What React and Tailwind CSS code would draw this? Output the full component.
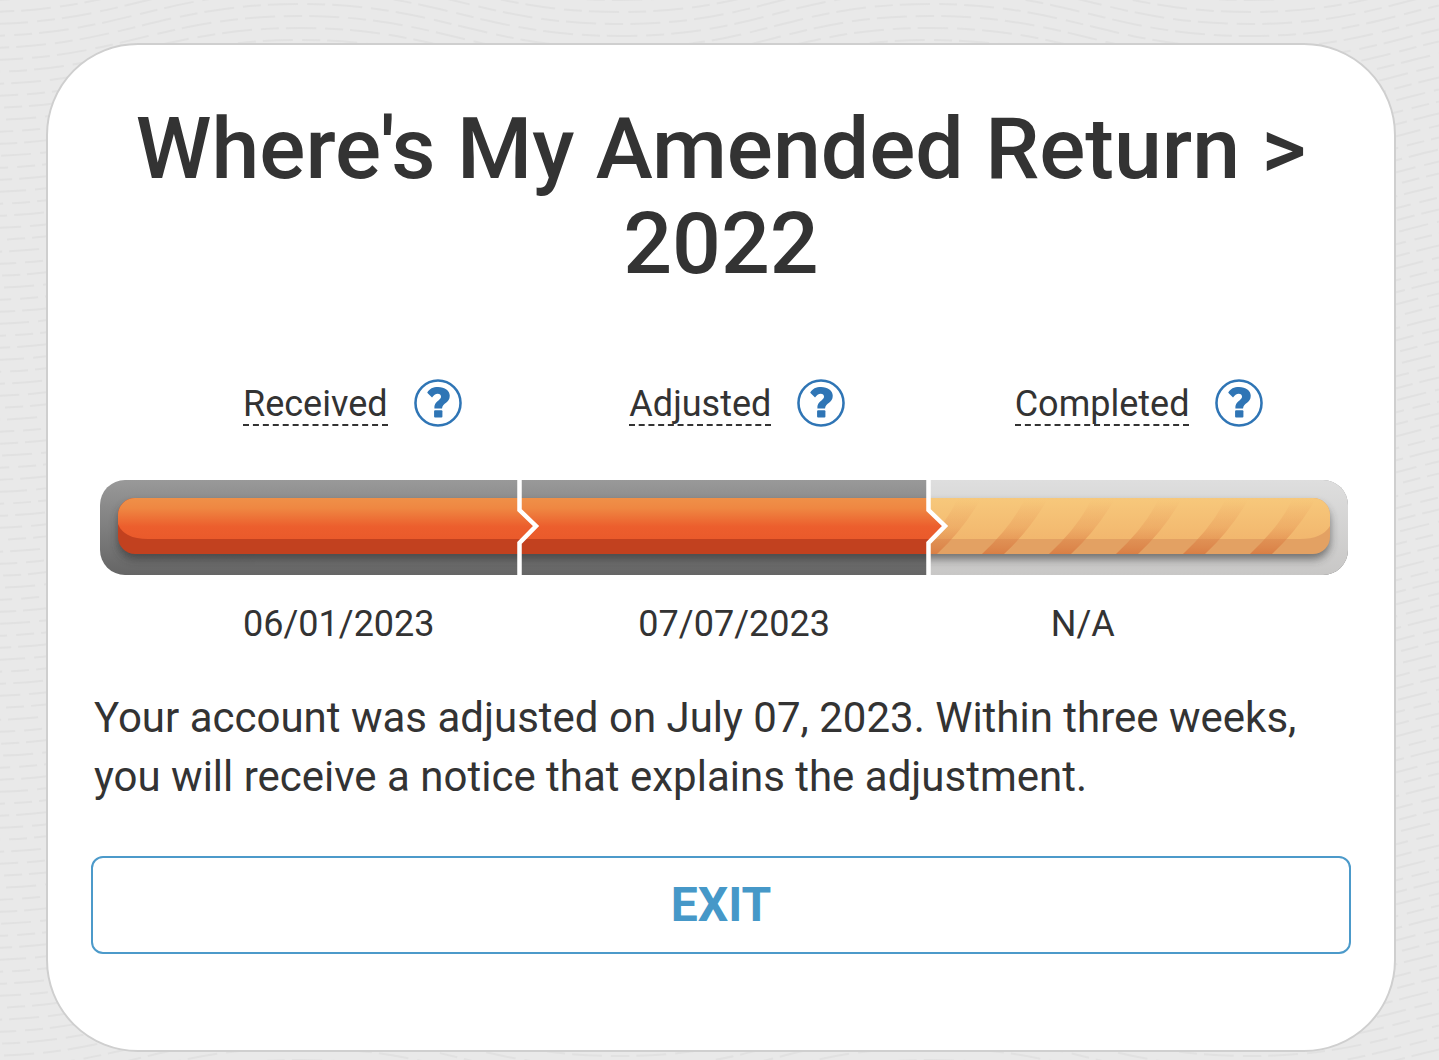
const steps = [
  { id: 'received', label: 'Received', date: '06/01/2023' },
  { id: 'adjusted', label: 'Adjusted', date: '07/07/2023' },
  { id: 'completed', label: 'Completed', date: 'N/A' },
];

const waves = Array.from({ length: 120 }, (_, i) => i);

function WavyBackground() {
  return (
    <svg className="absolute inset-0 w-full h-full" aria-hidden="true">
      <g fill="none" stroke="#e1e1e1" strokeWidth="2" strokeDasharray="30 9 18 7">
        {waves.map((i) => (
          <path
            key={i}
            d={`M-20 ${i * 12} C120 ${i * 12} 160 ${i * 12 - 44} 300 ${i * 12 - 44} S480 ${i * 12} 620 ${i * 12} S790 ${i * 12 - 44} 930 ${i * 12 - 44} S1110 ${i * 12} 1250 ${i * 12} S1420 ${i * 12 - 44} 1560 ${i * 12 - 44} S1740 ${i * 12} 1880 ${i * 12} S2050 ${i * 12 - 44} 2190 ${i * 12 - 44}`}
            strokeDashoffset={(i * 23) % 64}
          />
        ))}
      </g>
    </svg>
  );
}

function HelpButton({ label }) {
  return (
    <button type="button" aria-label={`Help about ${label}`} className="shrink-0 cursor-pointer">
      <svg viewBox="0 0 49 49" className="block w-12 h-12">
        <circle cx="24.5" cy="24.5" r="23" fill="#fff" stroke="#2f75b5" strokeWidth="2.6" />
        <g fill="#2f75b5">
          <path d="M13.500 14 C15.500 10 19.500 8.200 24.500 8.200 C31.500 8.200 36.500 11.800 36.500 17.200 C36.500 24.600 29.200 24.400 28.600 30 H20.800 C20.200 22.400 27.600 21.800 27.600 18 C27.600 16 26.200 15 24.200 15 C21.800 15 20.200 16.400 18.400 18.800 Z" />
          <rect x="20.500" y="31.800" width="8.500" height="7.500" rx="1" />
        </g>
      </svg>
    </button>
  );
}

function ProgressBar() {
  const stripes = [815, 882, 949, 1016, 1083, 1150];

  return (
    <svg viewBox="0 0 1248 95" className="block w-full" role="img" aria-label="Received and adjusted, not yet completed">
      <defs>
        <linearGradient id="track" x1="0" y1="0" x2="0" y2="1">
          <stop offset="0" stopColor="#999" />
          <stop offset="0.2" stopColor="#8e8e8e" />
          <stop offset="1" stopColor="#656565" />
        </linearGradient>
        <linearGradient id="trackLight" x1="0" y1="0" x2="0" y2="1">
          <stop offset="0" stopColor="#dedede" />
          <stop offset="1" stopColor="#c8c7c6" />
        </linearGradient>
        <linearGradient id="orange" x1="0" y1="0" x2="0" y2="1">
          <stop offset="0" stopColor="#ef9048" />
          <stop offset="0.25" stopColor="#ef8742" />
          <stop offset="0.7" stopColor="#ec5e2d" />
          <stop offset="1" stopColor="#ea5a2b" />
        </linearGradient>
        <linearGradient id="yellow" x1="0" y1="0" x2="0" y2="1">
          <stop offset="0" stopColor="#f7c87b" />
          <stop offset="1" stopColor="#f2b76e" />
        </linearGradient>
        <linearGradient id="stripe" x1="0" y1="0" x2="0" y2="1">
          <stop offset="0" stopColor="#e28a4d" stopOpacity="0" />
          <stop offset="0.5" stopColor="#e28a4d" stopOpacity="0.28" />
          <stop offset="1" stopColor="#d6743c" stopOpacity="0.75" />
        </linearGradient>
        <filter id="shadow" x="-5%" y="-50%" width="110%" height="200%">
          <feGaussianBlur stdDeviation="4" />
        </filter>
        <clipPath id="outer">
          <rect width="1248" height="95" rx="25" />
        </clipPath>
        <clipPath id="pill">
          <rect x="18" y="18" width="1212" height="56" rx="17" />
        </clipPath>
        <clipPath id="lastPart">
          <path d="M828 0 V30 L845 46 L828 62 V95 H1248 V0 Z" />
        </clipPath>
      </defs>

      <g clipPath="url(#outer)">
        <rect width="1248" height="95" fill="url(#track)" />
        <rect x="828" width="420" height="95" fill="url(#trackLight)" />
        <rect x="18" y="24" width="1212" height="55" rx="17" fill="#333" opacity="0.6" filter="url(#shadow)" />

        <g clipPath="url(#pill)">
          <rect x="18" y="18" width="830" height="56" fill="#c2411f" />
          <path d="M18 18 H850 V59 H48 Q24 59 18 44 Z" fill="url(#orange)" />
          <g clipPath="url(#lastPart)">
            <rect x="828" y="18" width="402" height="56" fill="#e3a163" />
            <path d="M828 18 H1230 V46 Q1222 59 1200 59 H828 Z" fill="url(#yellow)" />
            {stripes.map((x) => (
              <path
                key={x}
                d={`M${x} 74 Q${x + 30} 46 ${x + 42} 20 H${x + 65} Q${x + 48} 50 ${x + 22} 74 Z`}
                fill="url(#stripe)"
              />
            ))}
          </g>
        </g>

        <g fill="none" stroke="#fff" strokeWidth="4.5">
          <path d="M419.500 0 V30 L436 46 L419.500 63 V95" />
          <path d="M828.500 0 V30 L845 46 L828.500 63 V95" />
        </g>
      </g>
    </svg>
  );
}

export default function App() {
  return (
    <div className="relative min-h-screen overflow-hidden bg-[#e9e9e9] pt-[43px] pr-[43px] pb-[9px] pl-[46px] font-['Roboto',sans-serif] text-[#333]">
      <WavyBackground />

      <main className="relative bg-white border-2 border-[#cfcfcf] rounded-[92px] px-[43px] pt-[56px] pb-[96px]">
        <h1 className="text-center text-[86px] leading-[95px] font-medium">
          Where's My Amended Return &gt; 2022
        </h1>

        <div className="mt-[88px] pl-[152px] grid grid-cols-[386fr_385fr_336fr]">
          {steps.map((step) => (
            <div key={step.id} className="flex items-center gap-[26px]">
              <a
                href={`#${step.id}`}
                className="pt-1 text-[36px] leading-[40px] border-b-2 border-dashed border-[#333]"
              >
                {step.label}
              </a>
              <HelpButton label={step.label} />
            </div>
          ))}
        </div>

        <div className="mt-[53px] pl-[9px] pr-[3px]">
          <ProgressBar />
        </div>

        <div className="mt-[25px] pl-[152px] grid grid-cols-[395fr_412fr_300fr] text-[36px] leading-[48px]">
          {steps.map((step) => (
            <span key={step.id}>{step.date}</span>
          ))}
        </div>

        <p className="mt-10 pl-[3px] text-[42px] leading-[59px]">
          Your account was adjusted on July 07, 2023. Within three weeks, you will receive a notice that explains the
          adjustment.
        </p>

        <button
          type="button"
          className="mt-[50px] block w-full h-[98px] border-2 border-[#4c9aca] rounded-xl text-[48px] leading-none font-bold text-[#4698c8] cursor-pointer"
        >
          EXIT
        </button>
      </main>
    </div>
  );
}
